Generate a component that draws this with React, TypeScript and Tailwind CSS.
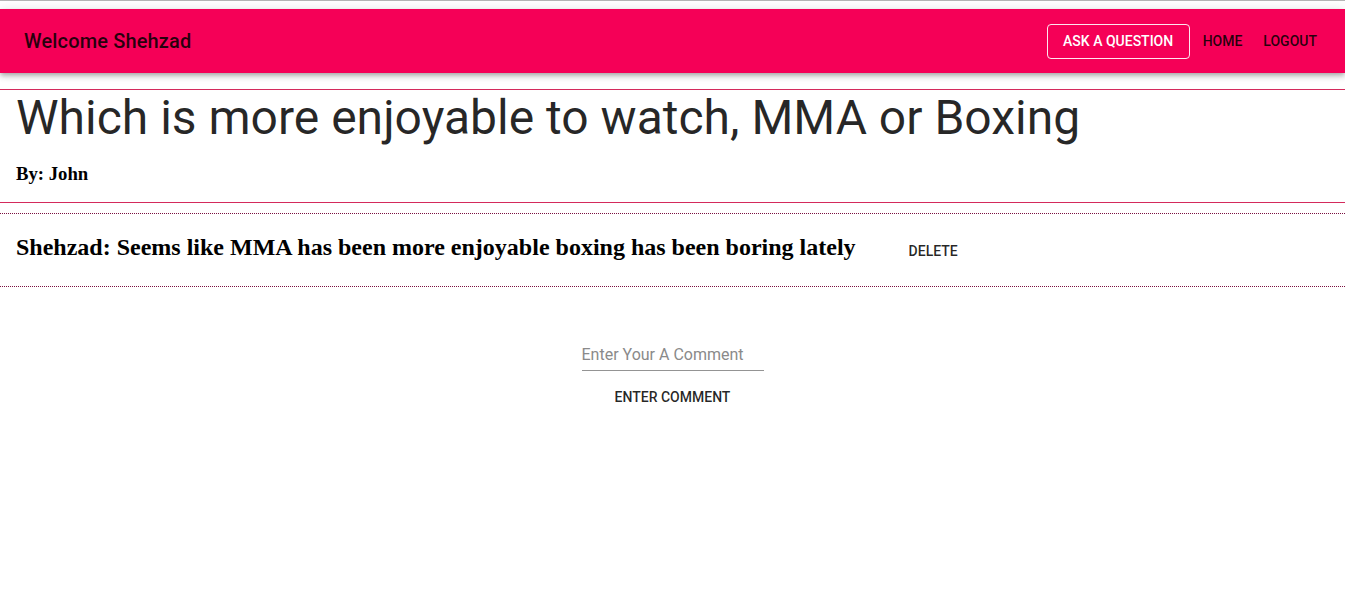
import React from 'react'

const roboto = { fontFamily: 'Roboto, "Liberation Sans", sans-serif' }
const serif = { fontFamily: '"Liberation Serif", "Times New Roman", serif' }

export default function App() {
  return (
    <div className="min-h-screen bg-white">
      <div className="h-px bg-[#b5b5b5]" />
      <div className="pt-2">
        <header
          className="h-16 bg-[#f50057] flex items-center justify-between pl-6 pr-5 shadow-[0_2px_4px_-1px_rgba(0,0,0,0.2),0_4px_5px_0_rgba(0,0,0,0.14),0_1px_10px_0_rgba(0,0,0,0.12)]"
          style={roboto}
        >
          <h6 className="text-[20px] font-medium text-black/85 tracking-[0.15px]">Welcome Shehzad</h6>
          <nav className="flex items-center text-sm font-medium">
            <button className="h-[35px] w-[143px] border border-white/90 rounded text-white uppercase mr-[5px]">
              Ask a Question
            </button>
            <button className="h-9 px-2 text-black/85 uppercase">Home</button>
            <button className="h-9 px-2 text-black/85 uppercase ml-[5px]">Logout</button>
          </nav>
        </header>
      </div>

      <section className="mt-4 border-y border-[#d42a5c] pl-4 pb-[14px]">
        <h1 className="text-[48px] leading-[1.167] text-black/85" style={roboto}>
          Which is more enjoyable to watch, MMA or Boxing
        </h1>
        <h4 className="mt-[14px] text-[18.72px] font-bold text-black" style={serif}>
          By: John
        </h4>
      </section>

      <div className="mt-[10px] border-y border-dotted border-[#7a1040] flex items-center pl-4 h-[74px]">
        <h2 className="-mt-1.5 text-[24px] font-bold text-black" style={serif}>
          Shehzad: Seems like MMA has been more enjoyable boxing has been boring lately
        </h2>
        <button className="mt-0.5 ml-[45px] px-2 text-sm font-medium uppercase text-black/85" style={roboto}>
          Delete
        </button>
      </div>

      <div className="flex flex-col items-center mt-[56px]" style={roboto}>
        <input
          placeholder="Enter Your A Comment"
          className="w-[182px] border-b border-[#949494] pb-[3px] text-base outline-none placeholder:text-[#8a8a8a]"
        />
        <button className="mt-[10px] px-2 py-1.5 text-sm font-medium uppercase text-black/85">
          Enter Comment
        </button>
      </div>
    </div>
  )
}
